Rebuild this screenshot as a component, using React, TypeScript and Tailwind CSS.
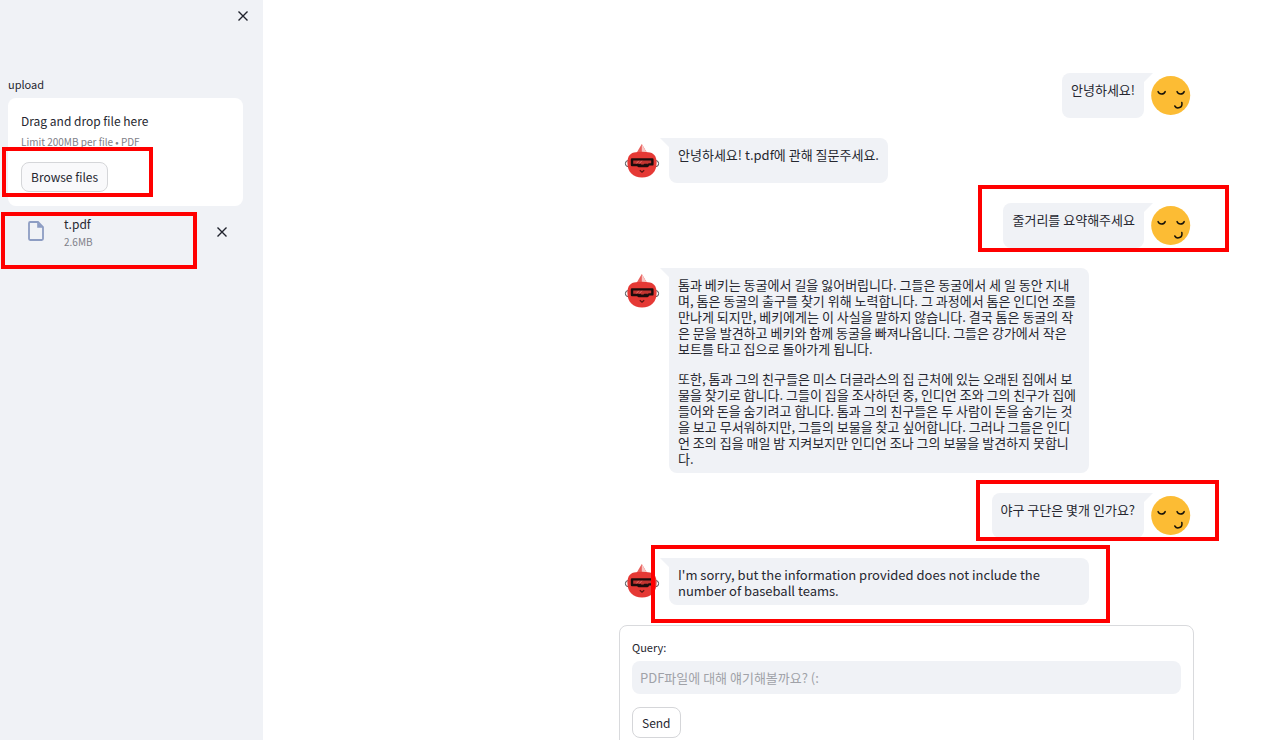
import type { ReactNode } from "react";

function CrossIcon() {
  return (
    <svg viewBox="0 0 12 12" className="size-3" fill="none" stroke="#1f222c" strokeWidth="1.4" aria-hidden="true">
      <path d="M1.5 1.5 10.5 10.5M10.5 1.5 1.5 10.5" />
    </svg>
  );
}

function FileIcon() {
  return (
    <svg viewBox="0 0 16 20" className="h-5 w-4 shrink-0" aria-hidden="true">
      <path d="M2.2 1H10L15 6V17.8Q15 19 13.8 19H2.2Q1 19 1 17.8V2.2Q1 1 2.2 1Z" fill="none" stroke="#8d9dc3" strokeWidth="1.8" />
      <path d="M9.2 1V6.8H15Z" fill="#8d9dc3" />
    </svg>
  );
}

function UserFace() {
  return (
    <svg viewBox="0 0 40 40" className="size-10 shrink-0" role="img" aria-label="user">
      <circle cx="19.7" cy="19.5" r="19.5" fill="#fcbc34" />
      <g fill="none" stroke="#15120a" strokeWidth="1.5" strokeLinecap="round">
        <path d="M7 15.6C8.2 18.8 12.8 18.8 14.2 15.6" />
        <path d="M26 15.6C27.2 18.8 31.8 18.8 33.2 15.6" />
        <path d="M23.8 30C25.8 33.4 32.2 32 30.8 26.4" />
      </g>
    </svg>
  );
}

function BotFace() {
  return (
    <svg viewBox="0 0 36 36" className="size-9 shrink-0" role="img" aria-label="bot">
      <path d="M17.8 1 11.6 11.5H24Z" fill="#e95e5a" />
      <path d="M17.8 1V11H23.5Z" fill="#f7c9c7" />
      <g fill="#fff" stroke="#4a4c52" strokeWidth="1">
        <ellipse cx="4" cy="20.6" rx="2.6" ry="3" />
        <ellipse cx="32" cy="20.6" rx="2.6" ry="3" />
      </g>
      <path d="M10 9.4Q18 8 26 9.4C31 10.6 32.6 14.6 32.6 20C32.6 29 27 34.4 18 34.4S3.4 29 3.4 20C3.4 14.6 5 10.6 10 9.4Z" fill="#e53935" />
      <path d="M8 16.4H28.4V21.4H25.4Q24.6 21.4 24 22.2L23.4 23H14.8L13.2 22H8Z" fill="#c33430" stroke="#1c0d0d" strokeWidth="2.4" strokeLinejoin="round" />
      <path d="M13.4 22.6V20.8H16.4L17.4 21.8H19.4L20.4 20.8H23.4V22.6Z" fill="#1c0d0d" />
      <path d="M12.4 20.4 14.8 17.8M15.4 20.4 17.8 17.8" stroke="#e7706d" strokeWidth="1" />
      <path d="M15.8 27.2 18 29.2 20.2 27.2" fill="none" stroke="#5d1513" strokeWidth="1.2" />
    </svg>
  );
}

function Tail({ flip }: { flip?: boolean }) {
  return (
    <svg viewBox="0 0 9 9" className={flip ? "size-[9px] shrink-0 -scale-x-100" : "size-[9px] shrink-0"} aria-hidden="true">
      <path d="M0 0H9V9Z" fill="#f0f2f6" />
    </svg>
  );
}

function Highlight({ place }: { place: string }) {
  return <span aria-hidden="true" className={`pointer-events-none absolute z-10 border-4 border-[#ff0000] ${place}`} />;
}

function UserMessage({ text, highlight }: { text: string; highlight?: string }) {
  return (
    <li className="relative flex justify-end pr-[3px]">
      <p className="min-h-[45px] rounded-lg rounded-tr-none bg-[#f0f2f6] p-[9px]">{text}</p>
      <Tail flip />
      <span className="-ml-[2px] flex pt-[3px]">
        <UserFace />
      </span>
      {highlight && <Highlight place={highlight} />}
    </li>
  );
}

function BotMessage({ children, highlight }: { children: ReactNode; highlight?: string }) {
  return (
    <li className="relative flex pl-[5px]">
      <span className="flex pt-[5px]">
        <BotFace />
      </span>
      <Tail />
      <div className="flex min-h-[45px] max-w-[420px] flex-col gap-[14px] rounded-lg rounded-tl-none bg-[#f0f2f6] px-[9px] pt-[9px] pb-[6px]">
        {children}
      </div>
      {highlight && <Highlight place={highlight} />}
    </li>
  );
}

export default function App() {
  return (
    <div className="flex h-screen overflow-hidden bg-white font-['Noto_Sans_CJK_KR','Noto_Sans',sans-serif] text-[13px] leading-4 text-[#262730]">
      <aside className="w-[263px] shrink-0 bg-[#f0f2f6] px-2">
        <div className="flex justify-end pt-[10px] pr-[6px]">
          <button type="button" aria-label="Close sidebar">
            <CrossIcon />
          </button>
        </div>
        <label htmlFor="browse" className="mt-[54px] block text-[11px] leading-4">
          upload
        </label>
        <section className="mt-[6px] mr-3 rounded-lg bg-white px-[13px] pt-[15px] pb-[14px] text-[12px]">
          <p>Drag and drop file here</p>
          <p className="mt-[6px] text-[10px] leading-[14px] text-[#808189]">Limit 200MB per file • PDF</p>
          <div className="relative mt-[13px] flex">
            <button id="browse" type="button" className="h-[30px] rounded-lg border border-[#d5d6d9] bg-[#f9f9fb] px-[9px]">
              Browse files
            </button>
            <Highlight place="-left-[19px] -top-[15px] h-[50px] w-[151px]" />
          </div>
        </section>
        <div className="relative flex items-start pt-[10px] pr-[27px] pl-5">
          <span className="flex pt-[5px]">
            <FileIcon />
          </span>
          <div className="ml-5 flex-1">
            <p className="text-[12px]">t.pdf</p>
            <p className="mt-[2px] text-[10px] text-[#808189]">2.6MB</p>
          </div>
          <button type="button" aria-label="Remove t.pdf" className="pt-[10px]">
            <CrossIcon />
          </button>
          <Highlight place="-left-[7px] top-[6px] h-[57px] w-[196px]" />
        </div>
      </aside>

      <main className="flex min-w-0 flex-1 justify-end pt-[73px] pr-[86px]">
        <div className="w-full max-w-[575px]">
          <ul className="flex flex-col gap-5">
            <UserMessage text="안녕하세요!" />
            <BotMessage>
              <p>안녕하세요! t.pdf에 관해 질문주세요.</p>
            </BotMessage>
            <UserMessage text="줄거리를 요약해주세요" highlight="-right-[35px] -top-[18px] h-[67px] w-[251px]" />
            <BotMessage>
              <p>
                톰과 베키는 동굴에서 길을 잃어버립니다. 그들은 동굴에서 세 일 동안 지내며, 톰은 동굴의 출구를 찾기 위해 노력합니다. 그 과정에서 톰은 인디언 조를 만나게 되지만, 베키에게는 이 사실을 말하지 않습니다. 결국 톰은 동굴의 작은 문을 발견하고 베키와 함께 동굴을 빠져나옵니다. 그들은 강가에서 작은 보트를 타고 집으로 돌아가게 됩니다.
              </p>
              <p>
                또한, 톰과 그의 친구들은 미스 더글라스의 집 근처에 있는 오래된 집에서 보물을 찾기로 합니다. 그들이 집을 조사하던 중, 인디언 조와 그의 친구가 집에 들어와 돈을 숨기려고 합니다. 톰과 그의 친구들은 두 사람이 돈을 숨기는 것을 보고 무서워하지만, 그들의 보물을 찾고 싶어합니다. 그러나 그들은 인디언 조의 집을 매일 밤 지켜보지만 인디언 조나 그의 보물을 발견하지 못합니다.
              </p>
            </BotMessage>
            <UserMessage text="야구 구단은 몇개 인가요?" highlight="-right-[25px] -top-[13px] h-[61px] w-[243px]" />
            <BotMessage highlight="left-8 -top-[13px] h-[78px] w-[459px]">
              <p>I'm sorry, but the information provided does not include the number of baseball teams.</p>
            </BotMessage>
          </ul>
          <form className="mt-5 rounded-lg border border-[#d9dadd] px-3 pt-[13px] pb-4" onSubmit={(e) => e.preventDefault()}>
            <label htmlFor="query" className="block text-[11px] leading-4">
              Query:
            </label>
            <input
              id="query"
              type="text"
              placeholder="PDF파일에 대해 얘기해볼까요? (:"
              className="mt-[6px] block h-[33px] w-full rounded-lg bg-[#f0f2f6] px-2 text-[13px] outline-none placeholder:text-[#a0a2a8]"
            />
            <button type="submit" className="mt-[13px] h-[31px] rounded-lg border border-[#d5d6d9] bg-white px-[9px] text-[12px]">
              Send
            </button>
          </form>
        </div>
      </main>
    </div>
  );
}
